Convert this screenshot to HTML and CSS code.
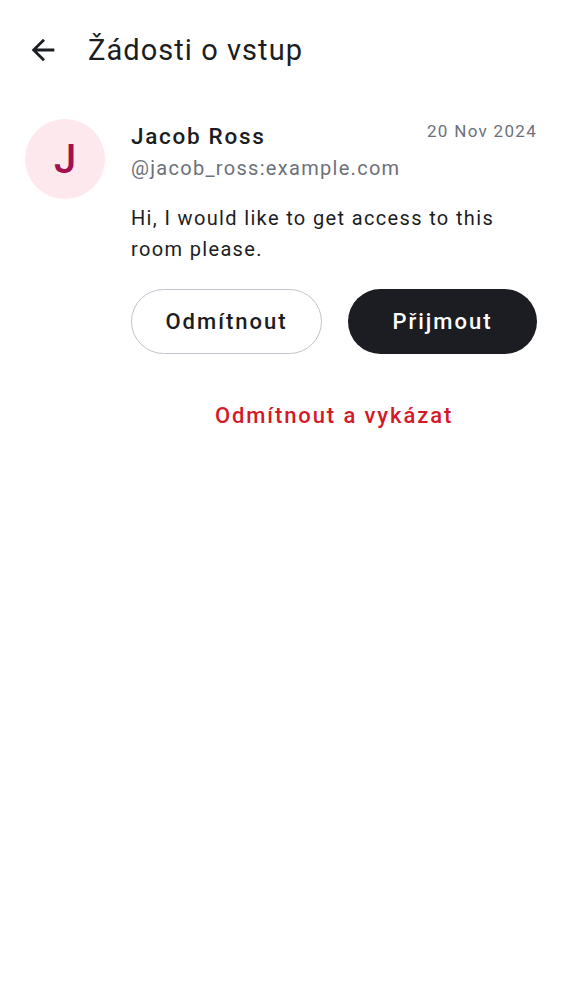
FILE: index.html
```html
<!DOCTYPE html>
<html lang="cs">
<head>
<meta charset="utf-8">
<link rel="stylesheet" href="styles.css">
</head>
<body>
<header class="topbar">
  <button class="back" aria-label="Zpět">
    <svg width="34" height="34" viewBox="0 0 24 24"><path d="M20 11H7.83l5.59-5.59L12 4l-8 8 8 8 1.41-1.41L7.83 13H20v-2z" fill="#1b1d22"/></svg>
  </button>
  <h1 class="title">Žádosti o vstup</h1>
</header>
<main class="list">
  <section class="request">
    <div class="avatar">J</div>
    <div class="body">
      <div class="head">
        <div class="name">Jacob Ross</div>
        <div class="date">20 Nov 2024</div>
      </div>
      <div class="handle">@jacob_ross:example.com</div>
      <p class="message">Hi, I would like to get access to this room please.</p>
      <div class="actions">
        <button class="btn outline">Odmítnout</button>
        <button class="btn filled">Přijmout</button>
      </div>
      <button class="ban">Odmítnout a vykázat</button>
    </div>
  </section>
</main>
</body>
</html>
```
FILE: styles.css
```css
* { box-sizing: border-box; }
body {
  margin: 0;
  background: #ffffff;
  font-family: Roboto, "Noto Sans", sans-serif;
  color: #1b1d22;
  width: 562px;
}
.topbar {
  display: flex;
  align-items: center;
  height: 100px;
  padding-left: 26px;
}
.back {
  border: 0;
  background: none;
  padding: 0;
  width: 34px;
  height: 34px;
  display: flex;
  margin-right: 28px;
}
.title {
  margin: 0;
  font-size: 29px;
  font-weight: 400;
  color: #1b1d22;
  letter-spacing: 1.05px;
  line-height: 36px;
}
.request {
  display: flex;
  padding: 19px 25px 0 25px;
  gap: 26px;
}
.avatar {
  flex: none;
  width: 80px;
  height: 80px;
  border-radius: 50%;
  background: #fde8ed;
  color: #a1114f;
  font-size: 40px;
  font-weight: 500;
  display: flex;
  align-items: center;
  justify-content: center;
}
.body {
  flex: 1;
  display: flex;
  flex-direction: column;
}
.head {
  display: flex;
  justify-content: space-between;
  align-items: flex-start;
}
.name {
  font-size: 22.5px;
  font-weight: 500;
  line-height: 32px;
  color: #1b1d22;
  letter-spacing: 1.7px;
  margin-top: 1px;
}
.date {
  font-size: 17px;
  color: #6c717b;
  line-height: 24px;
  letter-spacing: 1.3px;
}
.handle {
  font-size: 20px;
  color: #6c717b;
  line-height: 32px;
  letter-spacing: 1.3px;
}
.message {
  margin: 19px 0 0 0;
  font-size: 20px;
  line-height: 31px;
  color: #1b1d22;
  letter-spacing: 1.35px;
}
.actions {
  display: flex;
  gap: 26px;
  margin-top: 24px;
}
.btn {
  flex: 1;
  height: 65px;
  border-radius: 33px;
  font-family: Roboto, "Noto Sans", sans-serif;
  font-size: 22px;
  font-weight: 500;
  letter-spacing: 2px;
}
.outline {
  background: #ffffff;
  border: 1.5px solid #c0c4cc;
  color: #1b1d22;
}
.filled {
  background: #1b1d22;
  border: 0;
  color: #ffffff;
}
.ban {
  margin-top: 46px;
  align-self: center;
  border: 0;
  background: none;
  font-family: Roboto, "Noto Sans", sans-serif;
  font-size: 22px;
  font-weight: 500;
  color: #d51928;
  padding: 0;
  line-height: 32px;
  letter-spacing: 1.9px;
}
```
